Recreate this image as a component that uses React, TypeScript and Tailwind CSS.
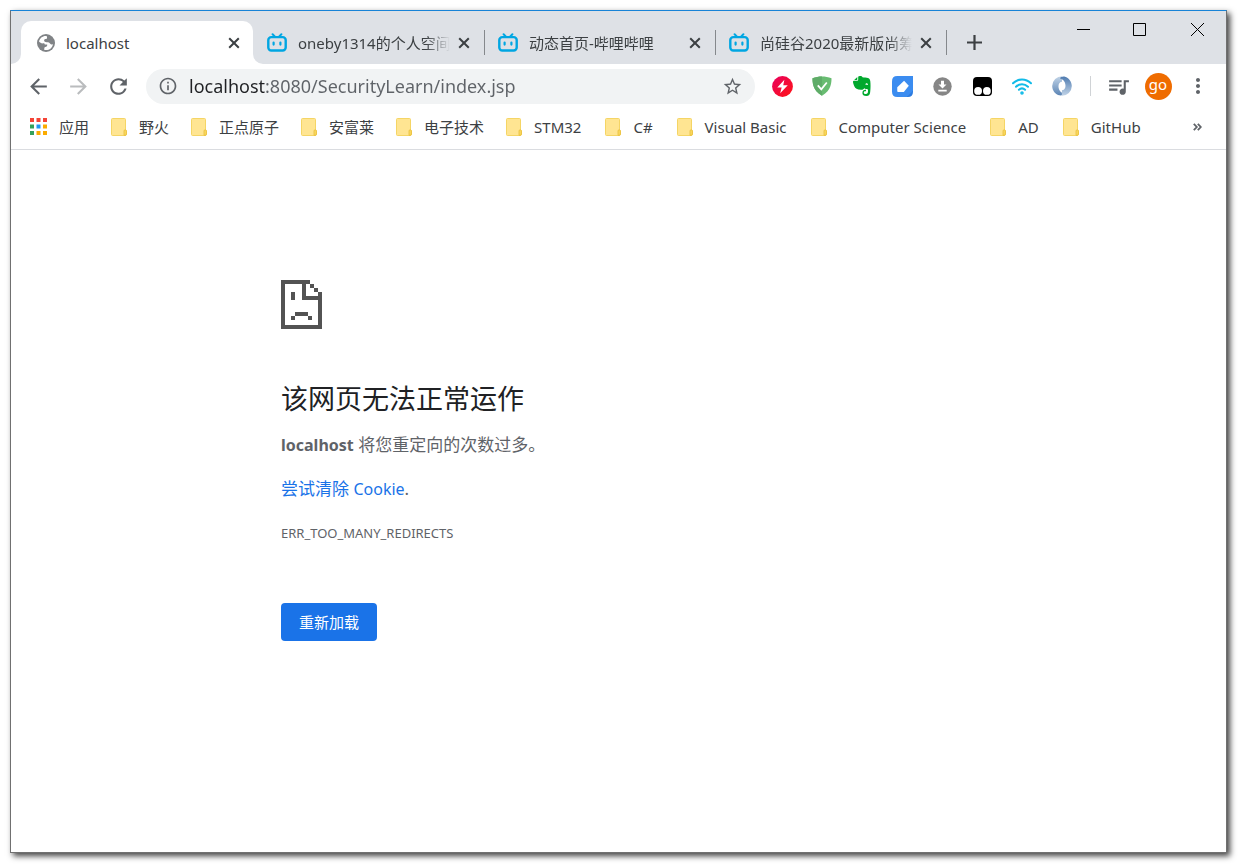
import type { ReactNode } from "react";
import {
  MdArrowBack,
  MdArrowForward,
  MdInfoOutline,
  MdMoreVert,
  MdQueueMusic,
  MdRefresh,
  MdStarBorder,
} from "react-icons/md";

const tabs = ["oneby1314的个人空间", "动态首页-哔哩哔哩", "尚硅谷2020最新版尚筹"];

const chineseBookmarks = ["野火", "正点原子", "安富莱", "电子技术"];
const latinBookmarks = ["STM32", "C#", "Visual Basic", "Computer Science", "AD", "GitHub"];

function GlobeIcon() {
  return (
    <svg viewBox="0 0 18 18" className="size-[18px] shrink-0" aria-hidden="true">
      <circle cx="9" cy="9" r="9" fill="#808386" />
      <path
        d="M9.600 2C6 1.500 2.600 4 2 7.600c1.200 1.500 2.600 2 4.400 1.700.9 0 1.300.5 1.400 1.300h2.400c.3 1.700-.6 2.300-1.900 2.500-.9.200-1.100.8-1 2.800 4.400 1 8.200-2 8.700-6-1.200.9-2.200.6-3-.4-.5-1-1.400-1.300-3.200-1.300-1.700 0-2.800-.6-2.700-1.900.1-1 .9-1.400 2.100-1.400C9.900 4.900 10.600 3.700 9.600 2z"
        fill="#fff"
      />
    </svg>
  );
}

function BilibiliIcon() {
  return (
    <svg viewBox="0 0 20 19" className="h-[19px] w-5 shrink-0" fill="none" stroke="#00a6e2" strokeLinecap="round" aria-hidden="true">
      <path d="M5.600 1.200 8 3.600M14.400 1.200 12 3.600" strokeWidth="2" />
      <rect x="1.300" y="4.100" width="17.400" height="13.400" rx="3" strokeWidth="2.400" />
      <path d="M6.600 9.600v2M13.400 9.600v2" strokeWidth="2.200" />
    </svg>
  );
}

function FolderIcon() {
  return (
    <svg viewBox="0 0 16 18" className="h-[18px] w-4 shrink-0" aria-hidden="true">
      <path d="M1.500.5h12a1 1 0 0 1 1 1V12c.8.2 1 .8 1 1.500v2.500a1.500 1.500 0 0 1-1.500 1.500H1.500a1 1 0 0 1-1-1v-15a1 1 0 0 1 1-1z" fill="#ffe592" stroke="#f5d565" />
      <path d="M13 17.300v-4.300a1.200 1.200 0 0 1 2.400 0v3a1.400 1.400 0 0 1-1.400 1.400z" fill="#fbd95f" stroke="#e9bf3e" strokeWidth=".8" />
    </svg>
  );
}

function AppsIcon() {
  const colors = ["#f44336", "#f44336", "#f44336", "#34a05b", "#2196f3", "#fbab00", "#34a05b", "#fbab00", "#fbab00"];
  return (
    <svg viewBox="0 0 17 17" className="h-[17px] w-[17px] shrink-0" aria-hidden="true">
      {colors.map((color, i) => (
        <rect key={i} x={(i % 3) * 6.5} y={Math.floor(i / 3) * 6.5} width="4" height="4" fill={color} />
      ))}
    </svg>
  );
}

function TabFlare({ className }: { className: string }) {
  return (
    <svg viewBox="0 0 10 10" className={className} aria-hidden="true">
      <path d="M10 0v10H0A10 10 0 0 0 10 0z" fill="#fff" />
    </svg>
  );
}

function ToolButton({ label, children }: { label: string; children: ReactNode }) {
  return (
    <button type="button" aria-label={label} className="flex h-9 w-10 shrink-0 items-center justify-center text-[#5f6368]">
      {children}
    </button>
  );
}

function CloseTab() {
  return (
    <button type="button" aria-label="关闭标签页" className="flex size-5 shrink-0 items-center justify-center text-[#3c4043]">
      <svg viewBox="0 0 12 12" className="size-3" fill="none" stroke="currentColor" strokeWidth="2" aria-hidden="true">
        <path d="m1.200 1.200 9.600 9.600M10.800 1.200l-9.600 9.600" />
      </svg>
    </button>
  );
}

function TabStrip() {
  return (
    <header className="flex h-[53px] items-end bg-[#dee1e6] pl-[10px]">
      <div className="relative flex h-[43px] w-[232px] items-center rounded-t-[10px] bg-white pr-[9px] pl-4">
        <TabFlare className="absolute bottom-0 -left-[10px] size-[10px]" />
        <TabFlare className="absolute -right-[10px] bottom-0 size-[10px] -scale-x-100" />
        <GlobeIcon />
        <span className="ml-[11px] flex-1">localhost</span>
        <CloseTab />
      </div>
      <div className="ml-px flex">
        {tabs.map((title) => (
          <div key={title} className="flex h-[43px] w-[231px] items-center pl-[13px]">
            <BilibiliIcon />
            <span className="mr-1 ml-[11px] min-w-0 flex-1 overflow-hidden whitespace-nowrap [mask-image:linear-gradient(to_right,black_calc(100%-24px),transparent)]">
              {title}
            </span>
            <CloseTab />
            <span className="ml-[10px] h-[25px] w-px bg-[#85888c]" />
          </div>
        ))}
      </div>
      <button type="button" aria-label="打开新的标签页" className="ml-[15px] flex h-[43px] w-6 items-center justify-center text-[#3c4043]">
        <svg viewBox="0 0 15 15" className="size-[15px]" fill="none" stroke="currentColor" strokeWidth="2.200" aria-hidden="true">
          <path d="M7.500 0v15M0 7.500h15" />
        </svg>
      </button>
      <div className="ml-auto flex h-9 self-start text-black">
        <button type="button" aria-label="最小化" className="flex w-14 items-center justify-center">
          <svg viewBox="0 0 13 13" className="size-[13px]" aria-hidden="true">
            <path d="M0 6.500h13" stroke="currentColor" />
          </svg>
        </button>
        <button type="button" aria-label="最大化" className="flex w-[57px] items-center justify-center">
          <svg viewBox="0 0 13 13" className="size-[13px]" aria-hidden="true">
            <path d="M.5.5h12v12H.5z" fill="none" stroke="currentColor" />
          </svg>
        </button>
        <button type="button" aria-label="关闭" className="flex w-[58px] items-center justify-center">
          <svg viewBox="0 0 13 13" className="size-[13px]" aria-hidden="true">
            <path d="m0 0 13 13M13 0 0 13" stroke="currentColor" />
          </svg>
        </button>
      </div>
    </header>
  );
}

function Extensions() {
  return (
    <>
      <ToolButton label="闪电">
        <svg viewBox="0 0 20 20" className="size-[21px]">
          <defs>
            <linearGradient id="bolt" x1="0" y1="0" x2="1" y2="1">
              <stop stopColor="#e8005f" />
              <stop offset="1" stopColor="#ff1414" />
            </linearGradient>
          </defs>
          <circle cx="10" cy="10" r="9.900" fill="url(#bolt)" />
          <path d="M11.800 3.600 5 11h4.200l-1.400 5.400L15 8.800h-4.300z" fill="#fff" />
        </svg>
      </ToolButton>
      <ToolButton label="广告拦截">
        <svg viewBox="0 0 20 20" className="size-5">
          <path d="M10 .5C7 .5 3.500 1 .5 2.300c0 3.300-.2 12 9.500 17.500 9.700-5.500 9.500-14.200 9.500-17.500C16.500 1 13 .5 10 .5z" fill="#68bc71" />
          <path d="M10 .5C7 .5 3.500 1 .5 2.300c0 3.300-.2 12 9.500 17.500z" fill="#5fac68" />
          <path d="m5.800 9.300 3.500 4 5.500-6.800" fill="none" stroke="#fff" strokeWidth="1.800" />
        </svg>
      </ToolButton>
      <ToolButton label="Evernote">
        <svg viewBox="0 0 18 20" className="h-5 w-[18px]">
          <path
            d="M5.200.8c.2-.5.800-.8 1.800-.8 1.500 0 2.200.5 2.500 1.200 1.500.2 4 .3 5.500.7 1.600.4 2.100 1.600 2.300 3.400.3 2.700.4 7-.1 10.700-.3 2.800-1.200 4-3.800 4-2.800 0-4-1.400-4-3.100 0-2 1.300-3.200 3-3.200h.6v1.500h-.7c-.9 0-1.500.5-1.500 1.300 0 1 .8 1.600 2 1.600 1.500 0 2.200-.8 2.200-3v-1.500c-.9-.3-2.700-.3-3.800-1.300-.3.900-1.300 1.600-3.200 1.500-3.900-.1-5.800-1.300-6.700-3.500C.6 8.500 0 6.800 0 5.700c0-.6.300-1 .8-1h3.500c.6 0 .9-.3.900-.9zM4.300 1v2.400c0 .3-.2.500-.5.500H1.200z"
            fill="#00a82d"
          />
          <path d="M12.400 8.800c.2-1.200.7-1.600 1.400-1.500.7.100 1.200.700 1.200 1.800-.9-.3-1.700-.4-2.600-.3z" fill="#fff" />
        </svg>
      </ToolButton>
      <ToolButton label="笔记">
        <svg viewBox="0 0 20 20" className="size-[21px]">
          <path d="M5 0h15v15l-5 5H5q-5 0-5-5V5q0-5 5-5z" fill="#3b8cf0" />
          <path d="M20 14v1q0 5-5 5h-1z" fill="#2b7be0" />
          <path d="M11.500 4.600 16 9.300l-4.700 5.900H5.800a.8.800 0 0 1-.8-.8v-3.600z" fill="#fff" />
        </svg>
      </ToolButton>
      <ToolButton label="下载">
        <svg viewBox="0 0 19 19" className="size-[19px]">
          <circle cx="9.500" cy="9.500" r="9.200" fill="#868686" />
          <path d="M8 3.800h3v3.700h2.500l-4 4-4-4H8zM5.300 12.800h8.400v1.600H5.300z" fill="#fff" />
        </svg>
      </ToolButton>
      <ToolButton label="Tampermonkey">
        <svg viewBox="0 0 19 19" className="size-[19px]">
          <rect width="19" height="19" rx="4" fill="#000" />
          <circle cx="5.100" cy="13.900" r="3.900" fill="#fff" />
          <circle cx="13.900" cy="13.900" r="3.900" fill="#fff" />
        </svg>
      </ToolButton>
      <ToolButton label="网络">
        <svg viewBox="0 0 20 17" className="h-[17px] w-5" fill="none" stroke="#12bbe8" strokeWidth="2" strokeLinecap="round">
          <path d="M1 5.300C6.200.1 13.800.1 19 5.300M4 8.700c3.500-3.400 8.500-3.400 12 0M6.900 11.800c1.900-1.700 4.300-1.700 6.200 0" />
          <circle cx="10" cy="15" r=".8" />
        </svg>
      </ToolButton>
      <ToolButton label="JSON">
        <svg viewBox="0 0 20 20" className="size-5">
          <defs>
            <linearGradient id="ring-dark" x1="0" y1="0" x2="0" y2="1">
              <stop stopColor="#c3d5e8" />
              <stop offset="1" stopColor="#5b84b4" />
            </linearGradient>
            <linearGradient id="ring-light" x1="0" y1="0" x2="0" y2="1">
              <stop stopColor="#4f7bb0" />
              <stop offset="1" stopColor="#c3d5e8" />
            </linearGradient>
          </defs>
          <path d="M10.200.2A9.900 9.900 0 0 0 .2 10c0 4.400 3 8.200 6.800 9.300 2 .5 4.500-.2 5-1.800-3.600-.8-5.600-3.800-5.500-7.500.1-2.400 1.500-4.200 3.500-4.200 0-2.200.2-4.300.2-5.600z" fill="url(#ring-dark)" />
          <path d="M9.800 19.800A9.900 9.900 0 0 0 19.800 10c0-4.400-3-8.200-6.800-9.300-2-.5-4.500.2-5 1.800 3.600.8 5.600 3.800 5.500 7.500-.1 2.400-1.500 4.200-3.500 4.200 0 2.200-.2 4.300-.2 5.600z" fill="url(#ring-light)" />
        </svg>
      </ToolButton>
    </>
  );
}

function Toolbar() {
  return (
    <div className="flex h-11 items-center pr-2 pl-[7px]">
      <ToolButton label="后退">
        <MdArrowBack className="size-[25px]" />
      </ToolButton>
      <ToolButton label="前进">
        <MdArrowForward className="size-[25px] text-[#babcbe]" />
      </ToolButton>
      <ToolButton label="重新加载此页">
        <MdRefresh className="size-[25px]" />
      </ToolButton>
      <div className="mr-[7px] ml-2 flex h-[35px] min-w-0 flex-1 items-center rounded-full bg-[#f1f3f4] pr-3 pl-3 text-[#5f6368]">
        <MdInfoOutline className="size-5 shrink-0" />
        <input
          type="text"
          aria-label="地址和搜索栏"
          defaultValue="localhost:8080/SecurityLearn/index.jsp"
          className="ml-[11px] h-full min-w-0 flex-1 bg-[linear-gradient(to_right,#202124_76px,#5f6368_76px)] bg-clip-text text-lg text-transparent outline-none"
        />
        <button type="button" aria-label="为此标签页添加书签" className="shrink-0">
          <MdStarBorder className="size-[21px]" />
        </button>
      </div>
      <Extensions />
      <span className="mr-[7px] ml-2 h-5 w-px shrink-0 bg-[#d0d3d6]" />
      <ToolButton label="媒体控件">
        <MdQueueMusic className="size-[25px]" />
      </ToolButton>
      <ToolButton label="用户">
        <span className="flex size-[27px] items-center justify-center rounded-full bg-[#ef6c00] pb-1 text-[15px] text-white">go</span>
      </ToolButton>
      <ToolButton label="自定义及控制">
        <MdMoreVert className="size-6" />
      </ToolButton>
    </div>
  );
}

function BookmarkGroup({ names, className }: { names: string[]; className: string }) {
  return (
    <div className={className}>
      {names.map((name) => (
        <a key={name} href="#bookmark" className="flex items-center gap-3">
          <FolderIcon />
          {name}
        </a>
      ))}
    </div>
  );
}

function BookmarkBar() {
  return (
    <nav className="flex h-[42px] items-center gap-[22px] border-b border-[#dadce0] pr-[21px] pb-1 pl-[19px] whitespace-nowrap">
      <a href="#apps" className="flex items-center gap-3">
        <AppsIcon />
        应用
      </a>
      <BookmarkGroup names={chineseBookmarks} className="flex gap-[22px]" />
      <BookmarkGroup names={latinBookmarks} className="flex gap-6" />
      <button type="button" aria-label="更多书签" className="ml-auto flex h-6 w-4 items-center justify-center text-[#5f6368]">
        <svg viewBox="0 0 9 8" className="h-2 w-[9px]" fill="none" stroke="currentColor" strokeWidth="1.800" aria-hidden="true">
          <path d="m.8.8 3 3.200-3 3.200M4.800.8l3 3.200-3 3.200" />
        </svg>
      </button>
    </nav>
  );
}

function SadFileIcon() {
  return (
    <svg viewBox="0 0 122 146" className="h-[49px] w-[41px]" fill="#535353" shapeRendering="crispEdges" aria-hidden="true">
      <path d="M0 0h86v12h12v12h12v12h12v110H0zM12 12v122h98V60H62V12zM74 12v36h36V36H98V24H86V12z" fillRule="evenodd" />
      <path d="M30 36h12v23H30zM42 95h37v12H42zM30 107h12v11H30zM79 107h12v11H79z" />
    </svg>
  );
}

function ErrorPage() {
  return (
    <main className="mx-auto w-full max-w-[675px] flex-1 pt-[130px] text-[17px] leading-6 text-[#5f6368]">
      <SadFileIcon />
      <h1 className="mt-[52px] text-[27px] leading-9 text-[#202124]">该网页无法正常运作</h1>
      <p className="mt-4">
        <strong className="text-base font-bold">localhost</strong> 将您重定向的次数过多。
      </p>
      <p className="mt-5">
        <a href="#clear-cookies" className="text-[#1a73e8]">
          尝试清除 <span className="text-base">Cookie</span>
        </a>
        .
      </p>
      <p className="mt-5 text-[13px]">ERR_TOO_MANY_REDIRECTS</p>
      <button type="button" className="mt-[58px] flex h-[38px] items-center rounded-[4px] bg-[#1a73e8] px-[18px] text-[15px] text-white">
        重新加载
      </button>
    </main>
  );
}

export default function App() {
  return (
    <div className="flex min-h-screen flex-col bg-white pt-[10px] pr-[11px] pb-[11px] pl-[10px] font-['Noto_Sans','Noto_Sans_CJK_SC',sans-serif] text-[15px] leading-6 text-[#3c4043]">
      <div className="flex flex-1 flex-col border border-[#707070] border-t-[#1883d7] bg-white shadow-[3px_3px_6px_rgba(0,0,0,0.75)]">
        <TabStrip />
        <Toolbar />
        <BookmarkBar />
        <ErrorPage />
      </div>
    </div>
  );
}
